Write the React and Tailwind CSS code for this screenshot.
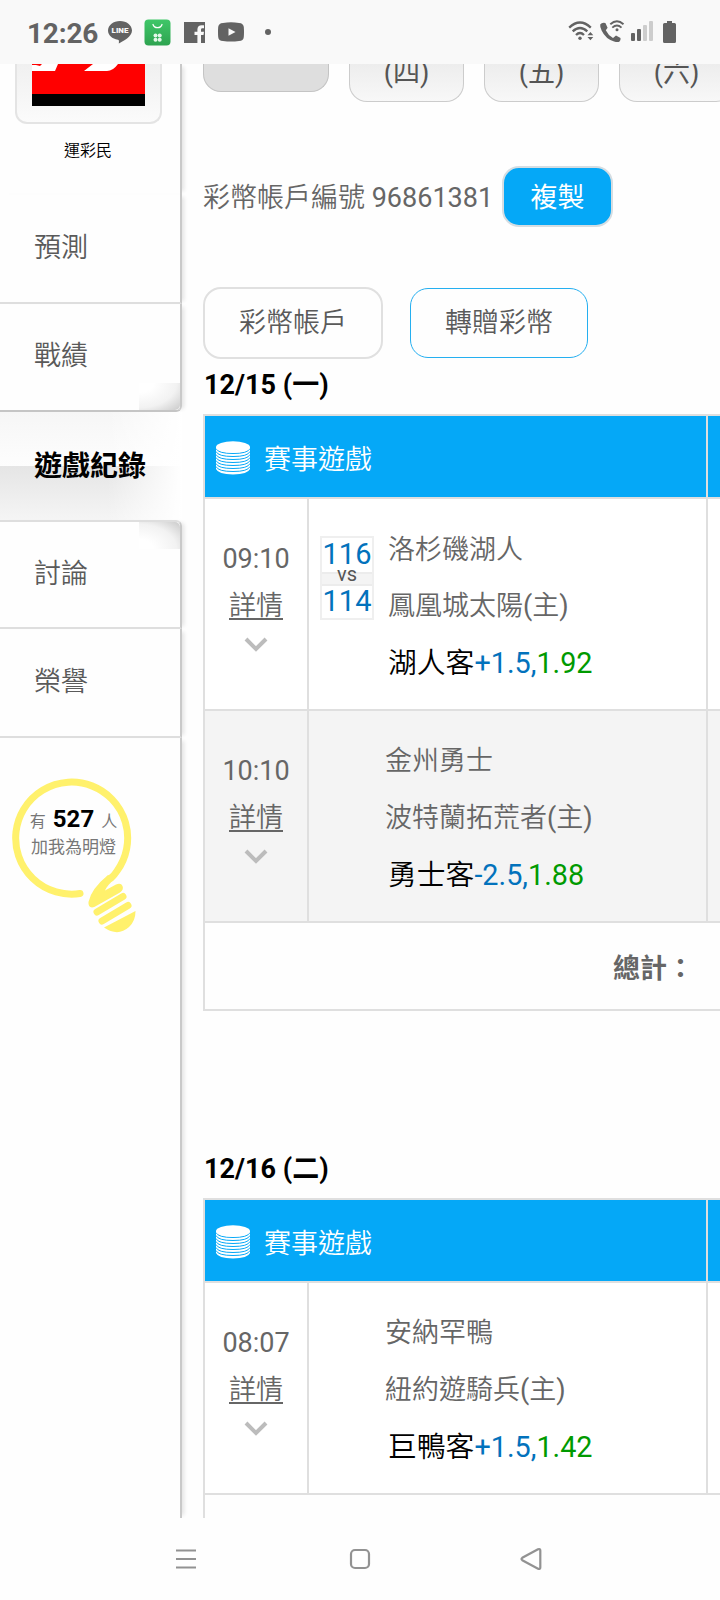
import React from "react";

const days = ["(四)", "(五)", "(六)"];

const records = [
  {
    date: "12/15 (一)",
    games: [
      {
        time: "09:10",
        score: ["116", "114"],
        away: "洛杉磯湖人",
        home: "鳳凰城太陽",
        pick: "湖人客",
        line: "+1.5,",
        odds: "1.92",
      },
      {
        time: "10:10",
        away: "金州勇士",
        home: "波特蘭拓荒者",
        pick: "勇士客",
        line: "-2.5,",
        odds: "1.88",
      },
    ],
  },
  {
    date: "12/16 (二)",
    games: [
      {
        time: "08:07",
        away: "安納罕鴨",
        home: "紐約遊騎兵",
        pick: "巨鴨客",
        line: "+1.5,",
        odds: "1.42",
      },
    ],
  },
];

const StatusBar = () => (
  <div className="h-16 shrink-0 bg-[#f9f9f9] flex items-center text-[#636363]">
    <span className="ml-[27px] mt-[3px] w-[73px] text-[28px] leading-none font-bold tracking-[-0.2px]">
      12:26
    </span>
    {/* LINE */}
    <div className="relative ml-2 w-6 h-6">
      <svg className="w-6 h-6" viewBox="0 0 24 24" fill="currentColor">
        <path d="M12 1C5.4 1 0 5.2 0 10.600c0 4.600 4.200 8.400 9.900 9.200 1.200.3 1.200 1 .9 3.700 4.500-2.300 13.200-6.800 13.200-12.900C24 5.200 18.600 1 12 1z" />
      </svg>
      <span className="absolute inset-x-0 top-[6px] text-center text-[8px] leading-[9px] font-black text-[#f9f9f9]">
        LINE
      </span>
    </div>
    {/* shop */}
    <svg className="ml-3 w-[27px] h-[27px]" viewBox="0 0 27 27">
      <defs>
        <linearGradient id="shop" x1="0" y1="0" x2="0" y2="1">
          <stop offset="0" stopColor="#3fc768" />
          <stop offset="1" stopColor="#2ea350" />
        </linearGradient>
      </defs>
      <rect x="0.5" y="0.5" width="26" height="26" rx="4" fill="url(#shop)" />
      <path d="M9 5.500a4.700 4.500 0 0 0 9 0" fill="none" stroke="#fff" strokeWidth="1.300" strokeLinecap="round" />
      <g fill="#e4f7e9">
        <circle cx="11.500" cy="16.500" r="2" />
        <circle cx="15.700" cy="16.500" r="2" />
        <circle cx="11.500" cy="20.700" r="2" />
        <circle cx="15.700" cy="20.700" r="2" />
      </g>
    </svg>
    {/* facebook */}
    <svg className="ml-[13px] w-[21px] h-[21px]" viewBox="0 0 21 21" fill="currentColor">
      <path d="M0 0h21v21h-4v-8h2.500l.5-3.200h-3V7.900c0-1 .3-1.600 1.600-1.600H20V3.400c-.3 0-1.300-.1-2.500-.1-2.400 0-4.100 1.500-4.100 4.200v2.300H10.500V13h2.900v8H0z" />
    </svg>
    {/* youtube */}
    <svg className="ml-[13px] w-[26px] h-5" viewBox="0 0 26 20">
      <path
        d="M5 .9Q13-.2 21 .9 25.500 1.200 25.800 5q.4 5 0 10-.3 3.800-4.800 4.100-8 1-16 0Q.5 18.800.2 15q-.4-5 0-10Q.5 1.200 5 .9z"
        fill="currentColor"
      />
      <path d="M10.500 6.200v7.600l7-3.800z" fill="#f9f9f9" />
    </svg>
    <span className="ml-[21px] w-[6px] h-[6px] rounded-full bg-[#636363]" />

    {/* wifi */}
    <svg className="ml-[297px] mb-[3px] w-[26px] h-5" viewBox="0 0 26 20" fill="none" stroke="currentColor" strokeWidth="2.300">
      <path d="M1.200 6.600Q12 -3.600 22.800 6.600" />
      <path d="M4.700 10.400Q12 3.600 19.300 10.400" />
      <path d="M8 14Q12 10 16 14" />
      <circle cx="12" cy="17.300" r="1.700" fill="currentColor" stroke="none" />
      <path d="M19.500 14.300l2.900-3.300 2.900 3.300zM19.500 16l2.900 3.300 2.900-3.300z" fill="currentColor" stroke="none" />
    </svg>
    {/* wifi call */}
    <svg className="ml-[5px] mb-[2px] w-[26px] h-[23px]" viewBox="0 0 26 23" fill="none">
      <path
        d="M1.200 4.500Q.8 7 2.600 10.500q4 8.500 12.500 11 3.500 1 5.200.2 1.700-1.500 1.200-3.800L17 15.600l-3 2.300Q9 15 6.800 10.200L8.600 7.800 6.400 3Q3 2 1.200 4.500z"
        fill="currentColor"
      />
      <path d="M11.300 4.200Q18 -1.800 24.500 4.200M13.300 7.600Q18 3.400 22.500 7.600" stroke="currentColor" strokeWidth="1.900" />
      <circle cx="18" cy="9.800" r="1.500" fill="currentColor" />
    </svg>
    {/* signal */}
    <div className="ml-[6px] mb-[2px] flex items-end gap-[2px] h-5">
      <span className="w-1 h-2 rounded-[1px] bg-[#636363]" />
      <span className="w-1 h-3 rounded-[1px] bg-[#636363]" />
      <span className="w-1 h-4 rounded-[1px] bg-[#cdcdcd]" />
      <span className="w-1 h-5 rounded-[1px] bg-[#cdcdcd]" />
    </div>
    {/* battery */}
    <svg className="ml-[10px] w-[13px] h-[22px]" viewBox="0 0 13 22" fill="currentColor">
      <path d="M4 0h5v2h2.500Q13 2 13 3.500v17q0 1.500-1.500 1.500h-10Q0 22 0 20.500v-17Q0 2 1.500 2H4z" />
    </svg>
  </div>
);

const Bulb = () => (
  <div className="relative ml-[11px] mt-[39px] w-[130px] h-[158px]">
    <svg className="absolute left-0 top-0 w-[132px] h-[158px]" viewBox="0 0 132 158" fill="none" stroke="#fff16c">
      <path
        d="M69 115.500A56 56 0 1 1 106 93Q103.500 97 100 100"
        strokeWidth="7"
        strokeLinecap="round"
      />
      <path
        d="M97 97Q80 111 77.500 124q-.5 5 3.500 5.500 2 0 5-2l23-13q4-3 2.500-6.500t-6.500-1.500l-11 6q2-5 11-13z"
        fill="#fff16c"
        stroke="none"
      />
      <path d="M86 134l26-15.500M91 143l26-15.500" strokeWidth="7" strokeLinecap="round" />
      <path d="M93 149.500L124.500 133q0 10-6.500 16-11 10-25 .5z" fill="#fff16c" stroke="none" />
    </svg>
    <div className="relative pt-[25px] w-[125px] text-center text-[16px] text-[#777]">
      <p className="h-[32px] leading-[33px] whitespace-nowrap">
        有 <b className="mx-[3px] text-[24px] font-bold text-black">527</b> 人
      </p>
      <p className="text-[17px] leading-[25px]">加我為明燈</p>
    </div>
  </div>
);

const SideItem = ({ label, className = "", children }) => (
  <div
    className={`relative shrink-0 w-[182px] pl-[34px] text-[27px] font-[350] text-[#5a5a5a] border-b-2 border-[#dedede] border-r-2 border-r-[#c9c9c9] shadow-[5px_0_4px_-3px_#e2e2e2] ${className}`}
  >
    {children}
    {label}
  </div>
);

const Sidebar = () => (
  <div className="shrink-0 w-[203px] flex flex-col">
    <div className="relative shrink-0 w-[182px] h-[130px] border-r-2 border-[#c9c9c9] shadow-[5px_0_4px_-3px_#e2e2e2]">
      <div className="ml-[15px] w-[147px] h-[60px] px-[15px] rounded-b-[12px] border-2 border-t-0 border-[#e4e4e4] bg-linear-to-b from-[#f0f0f0] to-[#fbfbfb]">
        <svg className="w-[113px] h-[42px]" viewBox="0 0 113 42">
          <rect width="113" height="42" fill="#f00" />
          <path d="M0 1h4l4 1 2-2h16l-3 7H0zM61 0h25q-5 7-11 7H52z" fill="#fff" />
          <rect y="30" width="113" height="12" />
        </svg>
      </div>
      <p className="mt-[15px] ml-[64px] text-[16px] font-[350] leading-6 text-black">運彩民</p>
    </div>
    <SideItem label="預測" className="h-[110px] leading-[109px]" />
    <SideItem label="戰績" className="h-[108px] leading-[105px] rounded-br-[6px] border-b-[#c5c5c5]">
      <div className="absolute right-0 bottom-0 w-[41px] h-[27px] rounded-br-[5px] bg-[radial-gradient(ellipse_at_0%_0%,#fff_25%,#f2f2f2_65%,#c4c4c4_105%)]" />
    </SideItem>
    {/* current page */}
    <div className="relative shrink-0 h-[108px] w-[182px] pl-[34px]">
      <div className="absolute inset-x-0 top-0 h-[54px] bg-linear-to-b from-[#f6f6f6] to-[#fdfdfd]" />
      <div className="absolute inset-x-0 bottom-0 h-[54px] bg-linear-to-b from-[#e5e5e5] to-[#f5f5f5]" />
      <div className="absolute inset-y-0 right-0 w-[75px] bg-linear-to-r from-white/0 to-white" />
      <p className="relative text-[28px] leading-[109px] font-bold text-black">遊戲紀錄</p>
    </div>
    <SideItem label="討論" className="h-[109px] leading-[105px] rounded-tr-[6px] border-t-2">
      <div className="absolute right-0 top-0 w-[41px] h-[27px] rounded-tr-[5px] bg-[radial-gradient(ellipse_at_0%_100%,#fff_25%,#f2f2f2_65%,#c4c4c4_105%)]" />
    </SideItem>
    <SideItem label="榮譽" className="h-[109px] leading-[106px]" />
    <div className="shrink-0 w-[182px] h-[780px] border-r-2 border-[#c9c9c9] shadow-[5px_0_4px_-3px_#e2e2e2] pt-px">
      <Bulb />
    </div>
  </div>
);

const Coins = () => (
  <svg className="mt-[2px] w-[34px] h-[34px]" viewBox="0 0 34 34">
    <path d="M0 6v22q2 5 17 5.500Q32 33 34 28V6z" fill="#fff" />
    <g fill="none" stroke="#05a8f7" strokeWidth="1">
      <path d="M0 7.500q2 5 17 5t17-5M0 10.500q2 5 17 5t17-5M0 13.500q2 5 17 5t17-5M0 16.500q2 5 17 5t17-5M0 19.500q2 5 17 5t17-5M0 22.500q2 5 17 5t17-5M0 25.500q2 5 17 5t17-5" />
    </g>
    <ellipse cx="17" cy="6" rx="17" ry="5.700" fill="#fff" />
  </svg>
);

const GameRow = ({ game, shaded }) => (
  <div className={`flex h-[212px] border-b-2 border-[#dfdfdf] ${shaded ? "bg-[#f4f4f4]" : "bg-white"}`}>
    <div className="w-[104px] shrink-0 border-r-2 border-[#dfdfdf] flex flex-col items-center pt-[36px] text-[27px] leading-[48px]">
      <span>{game.time}</span>
      <span className="-mt-px font-[350] underline decoration-2 underline-offset-[3px]">詳情</span>
      <svg className="mt-[7px] w-6 h-4" viewBox="0 0 24 16" fill="none" stroke="#bcbcbc" strokeWidth="4">
        <path d="M2 2l10 10L22 2" />
      </svg>
    </div>
    <div className="w-[399px] shrink-0 border-r-2 border-[#dfdfdf] flex">
      <div className="w-[65px] ml-[11px] pt-[37px]">
        {game.score && (
          <div className="w-[54px] h-[84px] border-2 border-[#efefef] text-[29px] text-[#0272bc] text-center">
            <div className="h-[34px] leading-[32px]">{game.score[0]}</div>
            <div className="h-[14px] bg-[#f4f4f4] border-y-2 border-[#ececec] text-[20px] leading-[0px] text-[#555]">
              vs
            </div>
            <div className="h-[32px] leading-[30px]">{game.score[1]}</div>
          </div>
        )}
      </div>
      <div className="pt-[23px] whitespace-nowrap text-[27px] font-[350]">
        <p className={game.score ? "ml-[3px] leading-[56px]" : "leading-[55px]"}>{game.away}</p>
        <p className={game.score ? "ml-[3px] leading-[57px]" : "leading-[58px]"}>
          {game.home}
          <span className="font-normal">(</span>主<span className="font-normal">)</span>
        </p>
        <p className="ml-[3px] text-[28.8px] leading-[57px] text-black">
          {game.pick}
          <span className="font-normal text-[#0272bc]">{game.line}</span>
          <span className="font-normal text-[#009a00]">{game.odds}</span>
        </p>
      </div>
    </div>
  </div>
);

const RecordTable = ({ record }) => (
  <div className="shrink-0">
    <h3 className="h-[54px] pl-[1px] text-[27px] leading-[50px] font-bold text-black">{record.date}</h3>
    <div className="border-l-2 border-t-2 border-[#dfdfdf]">
      <div className="flex h-[83px] border-b-2 border-[#dfdfdf] bg-[#05a8f7] text-white">
        <div className="w-[503px] shrink-0 flex items-center border-r-2 border-[#dfdfdf] pl-[11px] gap-[14px] text-[27px]">
          <Coins />
          <span className="pt-[7px] font-[350]">賽事遊戲</span>
        </div>
      </div>
      {record.games.map((game, i) => (
        <GameRow key={game.time} game={game} shaded={i % 2 === 1} />
      ))}
      <div className="h-[88px] border-b-2 border-[#dfdfdf] pl-[408px] text-[27px] leading-[93px] font-bold text-[#666]">
        總計：
      </div>
    </div>
  </div>
);

const Content = () => (
  <div className="w-[517px] shrink-0 flex flex-col overflow-hidden">
    <div className="flex shrink-0 h-[102px] items-start text-[27px] text-[#555]">
      <div className="shrink-0 w-[126px] h-7 rounded-b-[18px] border border-t-0 border-[#c4c4c4] bg-[#dedede]" />
      {days.map((day) => (
        <div
          key={day}
          className="shrink-0 ml-[20px] w-[115px] h-[38px] rounded-b-[18px] border border-t-0 border-[#cccccc] bg-linear-to-b from-[#ededed] to-[#f8f8f8] text-center leading-[18px]"
        >
          {day}
        </div>
      ))}
    </div>
    <div className="flex shrink-0 h-[60px] items-center text-[27px]">
      <div className="w-[299px] pt-1 whitespace-nowrap">
        <span className="font-[350]">彩幣帳戶編號</span> 96861381
      </div>
      <button className="w-[111px] h-[61px] rounded-[17px] border-2 border-[#d5dde2] bg-[#05a8f7] pt-1 text-white">複製</button>
    </div>
    <div className="flex shrink-0 mt-[61px] h-[72px] items-center gap-[27px] text-[27px] font-[350] text-[#5a5a5a]">
      <button className="w-[180px] h-[72px] rounded-[18px] border-2 border-[#e0e0e0]">彩幣帳戶</button>
      <button className="w-[178px] h-[70px] rounded-[18px] border border-[#25aff0]">轉贈彩幣</button>
    </div>
    <div className="flex flex-col shrink-0 mt-px gap-[133px]">
      {records.map((record) => (
        <RecordTable key={record.date} record={record} />
      ))}
    </div>
  </div>
);

const NavBar = () => (
  <div className="h-[82px] shrink-0 bg-[#fefefe] flex items-center text-[#929292]">
    <svg className="ml-[175px] w-[22px] h-[22px]" viewBox="0 0 22 22" stroke="currentColor" strokeWidth="2.200">
      <path d="M1 2.500h20M1 11h20M1 19.500h20" />
    </svg>
    <svg className="ml-[152px] w-[22px] h-[22px]" viewBox="0 0 22 22" fill="none" stroke="currentColor" strokeWidth="2.200">
      <rect x="2" y="2" width="18" height="18" rx="4" />
    </svg>
    <svg className="ml-[148px] w-[24px] h-6" viewBox="0 0 24 24" fill="none" stroke="currentColor" strokeWidth="2.200">
      <path d="M19 2.300L3.300 10.800q-1.600 1.200 0 2.400L19 21.700q2.300.8 2.300-1.200v-17q0-2-2.300-1.200z" />
    </svg>
  </div>
);

const App = () => {
  return (
    <div className="w-[720px] h-[1600px] flex flex-col overflow-hidden bg-[#fefefe] text-[#666] font-['Roboto','Noto_Sans_CJK_TC',sans-serif]">
      <StatusBar />
      <div className="flex h-[1454px] shrink-0 overflow-hidden">
        <Sidebar />
        <Content />
      </div>
      <NavBar />
    </div>
  );
};

export default App;
